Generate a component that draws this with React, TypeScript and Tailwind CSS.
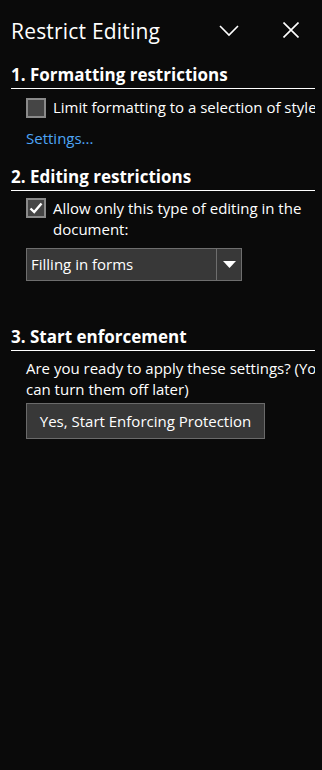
import React from "react";

function SectionHeading({ children, className = "" }: { children: React.ReactNode; className?: string }) {
  return (
    <div className={`ml-[11px] mr-[7px] border-b border-white pb-[2px] text-[17px] leading-[22px] font-bold whitespace-nowrap ${className}`}>
      {children}
    </div>
  );
}

function CheckBox({ checked }: { checked?: boolean }) {
  return (
    <div className="w-[20px] h-[20px] shrink-0 border-2 border-[#8a8a8a] bg-[#454545] flex items-center justify-center">
      {checked && (
        <svg width="14" height="12" viewBox="0 0 14 12">
          <path d="M1.5 6.5 L5.2 10 L12.5 1.5" fill="none" stroke="white" strokeWidth="2.4" />
        </svg>
      )}
    </div>
  );
}

export default function App() {
  return (
    <div className="w-[322px] h-[770px] bg-[#0a0a0a] text-white overflow-hidden font-['Open_Sans',sans-serif]">
      {/* header */}
      <div className="h-[62px] flex items-center pl-[11px]">
        <div className="flex-1 text-[21px] leading-[28px] tracking-[0.2px]">Restrict Editing</div>
        <svg width="20" height="12" viewBox="0 0 20 12" className="mt-[-1px]">
          <path d="M1 1 L10 10 L19 1" fill="none" stroke="white" strokeWidth="1.6" />
        </svg>
        <svg width="16" height="16" viewBox="0 0 16 16" className="ml-[44px] mr-[23px] mt-[-2px]">
          <path d="M0.5 0.5 L15.5 15.5 M15.5 0.5 L0.5 15.5" fill="none" stroke="white" strokeWidth="1.6" />
        </svg>
      </div>

      {/* 1 */}
      <SectionHeading className="mt-[2px]">1. Formatting restrictions</SectionHeading>
      <div className="mr-[7px] overflow-hidden">
        <div className="mt-[8px] ml-[26px] flex items-start gap-[7px] text-[15px] leading-[21px] whitespace-nowrap">
          <div className="mt-[1px]">
            <CheckBox />
          </div>
          <span>Limit formatting to a selection of styles</span>
        </div>
        <div className="mt-[10px] ml-[26px] text-[15px] leading-[21px] text-[#4ea5f5]">Settings...</div>
      </div>

      {/* 2 */}
      <SectionHeading className="mt-[17px]">2. Editing restrictions</SectionHeading>
      <div className="mr-[7px] overflow-hidden">
        <div className="mt-[7px] ml-[26px] flex items-start gap-[7px] text-[15px] leading-[21px] whitespace-nowrap">
          <CheckBox checked />
          <span>
            Allow only this type of editing in the
            <br />
            document:
          </span>
        </div>
        <div className="mt-[8px] ml-[26px] w-[216px] h-[33px] flex border border-[#6e6e6e] bg-[#383838] text-[15px]">
          <div className="flex-1 flex items-center pl-[4px]">Filling in forms</div>
          <div className="w-[25px] border-l border-[#6e6e6e] flex items-center justify-center">
            <svg width="13" height="7" viewBox="0 0 13 7">
              <path d="M0 0 H13 L6.5 7 Z" fill="white" />
            </svg>
          </div>
        </div>
      </div>

      {/* 3 */}
      <SectionHeading className="mt-[45px]">3. Start enforcement</SectionHeading>
      <div className="mr-[7px] overflow-hidden">
        <div className="mt-[7px] ml-[26px] text-[15px] leading-[21px] whitespace-nowrap">
          Are you ready to apply these settings? (You
          <br />
          can turn them off later)
        </div>
        <button className="mt-[3px] ml-[26px] w-[239px] h-[36px] border border-[#6a6a6a] bg-[#383838] text-[15px] text-white">
          Yes, Start Enforcing Protection
        </button>
      </div>
    </div>
  );
}
